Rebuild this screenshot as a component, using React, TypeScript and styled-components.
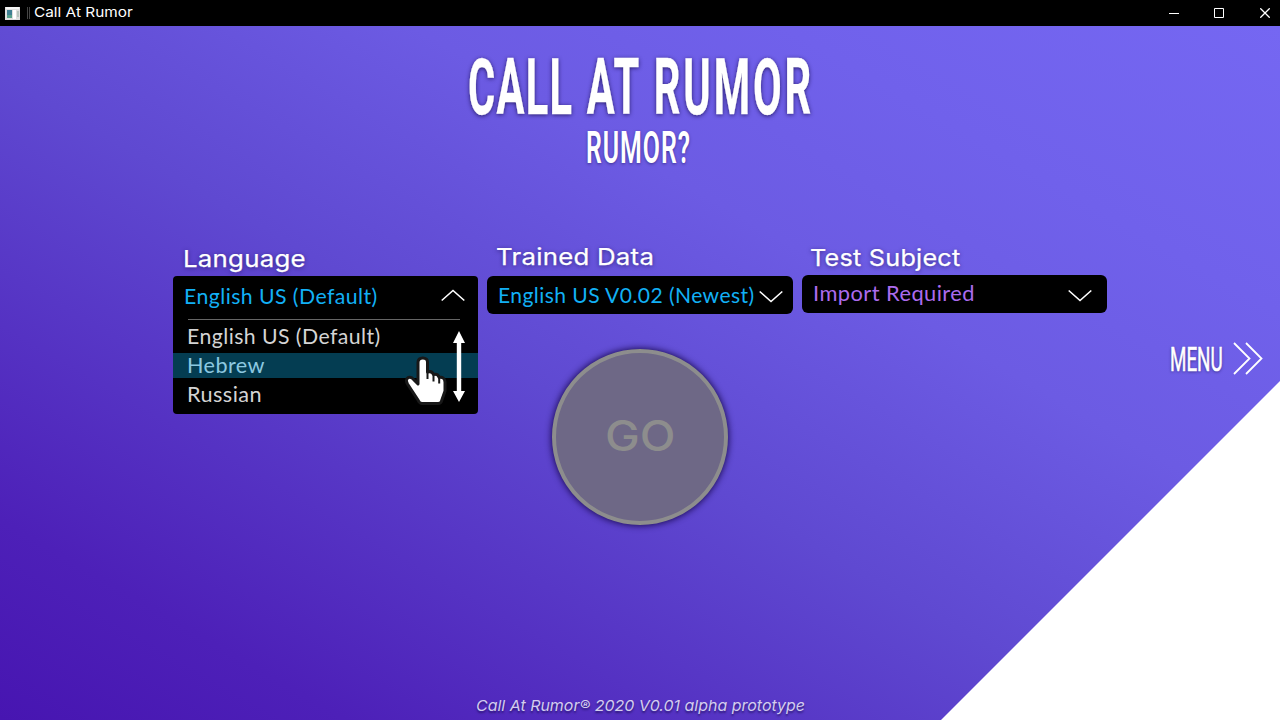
import React, { useLayoutEffect, useRef, useState } from "react";
import styled, { createGlobalStyle } from "styled-components";

const GlobalStyle = createGlobalStyle`
  * { box-sizing: border-box; }
  body { margin: 0; overflow: hidden; background: #000; }
`;

const geometric = `Inter, "Liberation Sans", sans-serif`;
const condensed = `Roboto, "Liberation Sans", sans-serif`;
const humanist = `Lato, "Liberation Sans", sans-serif`;

const FitBox = styled.span<{ $w: number }>`
  display: block;
  width: ${(p) => p.$w}px;
  white-space: nowrap;
  text-align: left;
`;
const FitInner = styled.span`
  display: inline-block;
  transform-origin: 0 50%;
`;

/* Condenses or widens a line of text so that it spans a given width. */
function Fit({ w, children }: { w: number; children: React.ReactNode }) {
  const ref = useRef<HTMLSpanElement>(null);
  const [scale, setScale] = useState(1);
  useLayoutEffect(() => {
    if (ref.current) setScale(w / ref.current.offsetWidth);
  }, [w]);
  return (
    <FitBox $w={w}>
      <FitInner ref={ref} style={{ transform: `scaleX(${scale})` }}>{children}</FitInner>
    </FitBox>
  );
}

const Window = styled.div`
  width: 1280px;
  height: 720px;
  display: flex;
  flex-direction: column;
  overflow: hidden;
`;
const TitleBar = styled.header`
  height: 26px;
  flex: none;
  display: flex;
  align-items: center;
  padding: 0 10px 0 5px;
  background: #000;
  color: #fff;
  font: 400 13.5px/24px ${geometric};
`;
const Grip = styled.i`
  width: 3px;
  height: 12px;
  margin: 0 4px 0 7px;
  border: 1px solid #444;
  border-width: 0 1px;
`;
const Caption = styled.div`
  height: 26px;
  flex: 1;
`;
const Controls = styled.div`
  display: grid;
  grid-template-columns: 45px 46px 10px;
`;
const Stage = styled.main`
  position: relative;
  flex: 1;
  display: flex;
  flex-direction: column;
  align-items: center;
  padding: 22px 0 5px;
  color: #fff;
  background: linear-gradient(30deg, #4715b1 0%, #4d20b8 14%, #5f49d1 45%, #6c5be3 65%, #7061eb 80%, #7567f2 100%);
`;
const Corner = styled.div`
  position: absolute;
  right: 0;
  bottom: 0;
  width: 339px;
  height: 339px;
  background: #fff;
  clip-path: polygon(100% 0, 100% 100%, 0 100%);
`;
const Title = styled.h1`
  margin: 0 0 0 2px;
  font: 700 78px/80px ${condensed};
  letter-spacing: 0.08em;
  text-shadow: 0 1px 6px rgba(20, 10, 70, 0.8);
  -webkit-text-stroke: 0.4px #fff;
`;
const Tight = styled.span`
  letter-spacing: 0.03em;
`;
const Wide = styled.span`
  letter-spacing: 0.07em;
`;
const Subtitle = styled.h2`
  margin: 0 0 0 -3px;
  font: 600 45px/40px ${condensed};
  letter-spacing: 0.04em;
  text-shadow: 0 1px 4px rgba(20, 10, 70, 0.5);
`;
const Selectors = styled.section`
  width: 934px;
  height: 146px;
  flex: none;
  padding-top: 74px;
  display: flex;
  align-items: flex-start;
  gap: 9px;
`;
const Field = styled.div<{ $top: number; $w: number }>`
  position: relative;
  width: ${(p) => p.$w}px;
  padding-top: ${(p) => p.$top}px;
`;
const Label = styled.div<{ $gap: number; $x: number }>`
  padding-left: ${(p) => p.$x}px;
  margin-bottom: ${(p) => p.$gap}px;
  font: 400 23.5px/30px ${geometric};
  letter-spacing: 0.01em;
  -webkit-text-stroke: 0.25px #fff;
  text-shadow: 0 1px 4px rgba(20, 10, 70, 0.6);
`;
const Select = styled.div<{ $open?: boolean; $color: string; $lift: number; $end: number }>`
  height: 38px;
  display: flex;
  justify-content: space-between;
  padding: 0 ${(p) => p.$end}px 0 11px;
  background: #000;
  color: ${(p) => p.$color};
  border-radius: ${(p) => (p.$open ? "4px 4px 0 0" : "6px")};
  font: 400 20.5px/${(p) => 38 + p.$lift}px ${humanist};
  letter-spacing: 0.02em;
`;
const Options = styled.div`
  position: absolute;
  z-index: 2;
  top: 100%;
  left: 0;
  width: 100%;
  height: 100px;
  background: #000;
  border-radius: 0 0 4px 4px;
  font: 400 20.5px/29px ${humanist};
  letter-spacing: 0.02em;
`;
const Divider = styled.div`
  height: 1px;
  margin: 5px 18px 0 15px;
  background: #666;
`;
const Option = styled.div<{ $active?: boolean }>`
  height: ${(p) => (p.$active ? 25 : 33)}px;
  padding-left: 14px;
  display: flex;
  align-items: center;
  color: ${(p) => (p.$active ? "#8cc8e0" : "#d4d4d4")};
  background: ${(p) => (p.$active ? "#043d52" : "transparent")};
`;
const ScrollArrow = styled.svg`
  position: absolute;
  left: 279px;
  top: 17px;
`;
const Hand = styled.svg`
  position: absolute;
  left: 232px;
  top: 42px;
`;
const Actions = styled.section`
  width: 100%;
  display: grid;
  grid-template-columns: 1fr 176px 1fr;
  padding-top: 35px;
`;
const Go = styled.button`
  grid-column: 2;
  width: 176px;
  height: 176px;
  padding: 0 0 2px;
  display: flex;
  align-items: center;
  justify-content: center;
  border: 4.5px solid #8d8d8d;
  border-radius: 50%;
  background: #6e6886;
  color: #8d8d8d;
  font: 500 42px/50px ${geometric};
  box-shadow: 0 0 6px 1px rgba(20, 5, 70, 0.85);
`;
const Menu = styled.nav`
  justify-self: end;
  height: 36px;
  margin: -7px 17px 0 0;
  display: flex;
  gap: 10px;
  font: 400 33px/36px ${condensed};
  text-shadow: 0 1px 4px rgba(20, 10, 70, 0.6);
  -webkit-text-stroke: 0.6px #fff;
`;
const DoubleChevron = styled.svg`
  margin-top: -1px;
`;
const Footer = styled.footer`
  margin-top: auto;
  color: #d3cdee;
  font: italic 400 15px/18px ${geometric};
  text-shadow: 0 2px 2px rgba(20, 10, 70, 0.6);
`;
const Chevron = styled.svg<{ $y: number }>`
  flex: none;
  margin-top: ${(p) => p.$y}px;
`;

function Arrow({ up, y }: { up?: boolean; y: number }) {
  return (
    <Chevron $y={y} width="24" height="13" viewBox="0 0 24 13" fill="none" stroke="#fff" strokeWidth="1.6">
      <path d={up ? "M.7 11.5 12 1.5l11.3 10" : "M.7 1.5 12 11.5l11.3-10"} />
    </Chevron>
  );
}

export default function App() {
  return (
    <Window>
      <GlobalStyle />
      <TitleBar>
        <svg width="15" height="13" viewBox="0 0 15 13">
          <path fill="#dedede" d="M0 0h15v13H0z" />
          <path fill="#f5f5f5" d="M1 0h13v2H1z" />
          <path fill="#3f7f93" d="M2 3h5v5H2z" />
          <path fill="#56a08b" d="M2 8h5v3H2z" />
          <path fill="#fff" d="M8 3h3v9H8z" />
          <path fill="#b7c4be" d="M12 4h2v6h-2z" />
        </svg>
        <Grip />
        <Caption><Fit w={99}>Call At Rumor</Fit></Caption>
        <Controls>
          <svg width="10" height="10"><path d="M0 5.5h10" stroke="#fff" /></svg>
          <svg width="10" height="10"><path d="M.5.5h9v9h-9z" stroke="#fff" fill="none" /></svg>
          <svg width="10" height="10"><path d="m.3.3 9.4 9.4m0-9.4L.3 9.7" stroke="#fff" strokeWidth="1.3" /></svg>
        </Controls>
      </TitleBar>
      <Stage>
        <Corner />
        <Title><Fit w={346}><Tight>CALL</Tight> <Tight>AT</Tight><Wide> RUMOR</Wide></Fit></Title>
        <Subtitle><Fit w={105}>RUMOR?</Fit></Subtitle>
        <Selectors>
          <Field $top={2} $w={305}>
            <Label $gap={2} $x={10}><Fit w={123}>Language</Fit></Label>
            <Select $open $color="#12b0f5" $lift={2} $end={13}>
              <Fit w={194}>English US (Default)</Fit>
              <Arrow up y={13} />
            </Select>
            <Options>
              <Divider />
              <Option><Fit w={194}>English US (Default)</Fit></Option>
              <Option $active><Fit w={78}>Hebrew</Fit></Option>
              <Option><Fit w={75}>Russian</Fit></Option>
              <ScrollArrow width="14" height="72" viewBox="0 0 14 72" fill="#fff">
                <path d="M7 0 13 12H9.2v48H13L7 71 1 60h3.8V12H1z" />
              </ScrollArrow>
              <Hand width="42" height="50" viewBox="0 0 42 50" fill="#fff" stroke="#181818" strokeWidth="3" strokeLinejoin="round">
                <path d="M13 6.5Q13 2 17.8 2T22.500 6.500V16Q27 14.500 28.500 18.500 33 17.500 34.200 21.500 39.500 20.500 40 26V35L36.500 45Q36 47.500 33 47.500H17Q14.500 47.500 13 44L2.500 28Q0 23 3.500 21.500 6.500 20.500 9 24L13 28Z" />
                <path d="M22.500 16v7M28.500 18.500v7M34.200 21.500v6" fill="none" strokeWidth="2" />
              </Hand>
            </Options>
          </Field>
          <Field $top={0} $w={306}>
            <Label $gap={4} $x={9}><Fit w={158}>Trained Data</Fit></Label>
            <Select $color="#12b0f5" $lift={0} $end={10}>
              <Fit w={257}>English US V0.02 (Newest)</Fit>
              <Arrow y={14} />
            </Select>
          </Field>
          <Field $top={1} $w={305}>
            <Label $gap={2} $x={8}><Fit w={150}>Test Subject</Fit></Label>
            <Select $color="#ac6bee" $lift={-2} $end={15}>
              <Fit w={162}>Import Required</Fit>
              <Arrow y={14} />
            </Select>
          </Field>
        </Selectors>
        <Actions>
          <Go><Fit w={71}>GO</Fit></Go>
          <Menu>
            <Fit w={53}>MENU</Fit>
            <DoubleChevron width="30" height="34" viewBox="0 0 30 34" fill="none" stroke="#fff" strokeWidth="1.8">
              <path d="m1 2 15.500 15.500L1 33M13 2l15.500 15.500L13 33" />
            </DoubleChevron>
          </Menu>
        </Actions>
        <Footer><Fit w={329}>Call At Rumor® 2020 V0.01 alpha prototype</Fit></Footer>
      </Stage>
    </Window>
  );
}
